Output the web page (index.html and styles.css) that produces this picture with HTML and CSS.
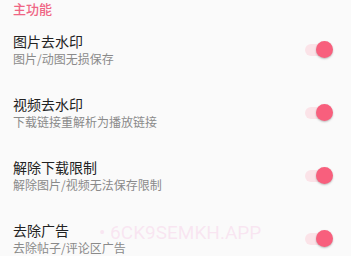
FILE: index.html
```html
<!DOCTYPE html>
<html lang="zh-CN">
<head>
<meta charset="utf-8">
<link rel="stylesheet" href="styles.css">
</head>
<body>
<div class="page">
  <div class="section-title">主功能</div>
  <div class="item">
    <div class="text">
      <div class="title">图片去水印</div>
      <div class="desc">图片/动图无损保存</div>
    </div>
    <div class="switch"><span class="track"></span><span class="thumb"></span></div>
  </div>
  <div class="item">
    <div class="text">
      <div class="title">视频去水印</div>
      <div class="desc">下载链接重解析为播放链接</div>
    </div>
    <div class="switch"><span class="track"></span><span class="thumb"></span></div>
  </div>
  <div class="item">
    <div class="text">
      <div class="title">解除下载限制</div>
      <div class="desc">解除图片/视频无法保存限制</div>
    </div>
    <div class="switch"><span class="track"></span><span class="thumb"></span></div>
  </div>
  <div class="item">
    <div class="text">
      <div class="title">去除广告</div>
      <div class="desc">去除帖子/评论区广告</div>
    </div>
    <div class="switch"><span class="track"></span><span class="thumb"></span></div>
  </div>
  <div class="watermark">• 6CK9SEMKH.APP</div>
</div>
</body>
</html>
```
FILE: styles.css
```css
html, body {
  margin: 0;
  padding: 0;
  background: #fafafa;
}
.page {
  position: relative;
  width: 351px;
  height: 256px;
  overflow: hidden;
  font-family: "Noto Sans CJK SC", "Noto Sans", sans-serif;
}
.section-title {
  padding: 1px 13px 3.5px;
  font-size: 13px;
  line-height: 15px;
  color: #ef6584;
  font-weight: 500;
}
.item {
  display: flex;
  align-items: center;
  justify-content: space-between;
  height: 63px;
  padding: 0 18px 0 13px;
}
.text {
  display: flex;
  flex-direction: column;
  margin-top: -3px;
}
.title {
  font-size: 14px;
  line-height: 18px;
  color: #222222;
}
.desc {
  font-size: 12px;
  line-height: 17px;
  color: #8a8a8a;
}
.switch {
  position: relative;
  width: 30px;
  height: 18px;
  margin-top: -2px;
}
.track {
  position: absolute;
  left: 2px;
  right: 2px;
  top: 3px;
  height: 12px;
  border-radius: 6px;
  background: #fbe3e8;
}
.thumb {
  position: absolute;
  right: 0;
  top: 0;
  width: 17px;
  height: 17px;
  border-radius: 50%;
  background: #f85f7d;
  box-shadow: 0 1px 2px rgba(0,0,0,0.25);
}
.watermark {
  position: absolute;
  left: 99px;
  top: 221px;
  font-family: Roboto, "Noto Sans", sans-serif;
  font-size: 19px;
  line-height: 24px;
  color: rgba(246, 190, 225, 0.35);
  white-space: nowrap;
}
```
